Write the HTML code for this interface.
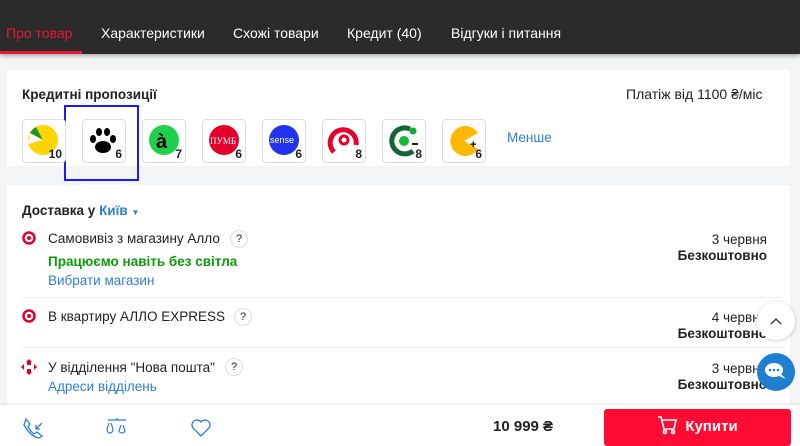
<!DOCTYPE html>
<html><head><meta charset="utf-8"><style>
*{margin:0;padding:0;box-sizing:border-box}
body{width:800px;height:446px;overflow:hidden;background:#f3f4f6;font-family:"Liberation Sans",Arial,sans-serif;position:relative;color:#222}
.hdr{position:absolute;left:0;top:0;width:800px;height:54px;background:#2b2b2b;box-shadow:0 2px 4px rgba(0,0,0,.3)}
.hdr span{position:absolute;top:25px;color:#fff;font-size:14px}
.ul{position:absolute;left:0;top:51px;width:82px;height:3px;background:#e8173d}
.card{position:absolute;background:#fff}
.t{position:absolute;white-space:nowrap}
.box{position:absolute;top:119px;width:44px;height:44px;border:1px solid #ddd;border-radius:4px;background:#fff}
.box svg{position:absolute;left:1px;top:1px}
.box .n{position:absolute;right:3px;bottom:1px;font-size:12px;font-weight:bold;color:#222}
.q{position:absolute;width:18px;height:18px;border:1px solid #ddd;border-radius:50%;font-size:11px;text-align:center;line-height:16px;color:#222}
.ln{position:absolute;left:22px;width:760px;height:1px;background:#eee}
</style></head><body>
<div class="hdr">
<span style="left:6px;color:#e8173d">Про товар</span>
<span style="left:101px">Характеристики</span>
<span style="left:233px">Схожі товари</span>
<span style="left:347px">Кредит (40)</span>
<span style="left:451px">Відгуки і питання</span>
<div class="ul"></div>
</div>
<div class="card" style="left:7px;top:70px;width:783px;height:96px"></div>
<div class="t" style="left:22px;top:87px;font-size:13.5px;font-weight:bold">Кредитні пропозиції</div>
<div class="t" style="left:626px;top:86px;font-size:14px">Платіж від 1100 ₴/міс</div>
<div style="position:absolute;left:64px;top:105px;width:75px;height:76px;border:2px solid #1a1aff"></div>
<div class="box" style="left:22px"><svg width="41" height="41"><circle cx="19" cy="19" r="15" fill="#ffd400"/><path d="M19 19L6 12A15 15 0 0 1 12 6Z" fill="#1a9a1a"/><path d="M19 19L4 23 6 12Z" fill="#fff"/></svg><span class="n">10</span></div>
<div class="box" style="left:82px"><svg width="41" height="41"><ellipse cx="19" cy="26" rx="8" ry="6" fill="#000"/><ellipse cx="9" cy="18" rx="3" ry="4" fill="#000"/><ellipse cx="15" cy="11" rx="3" ry="4" fill="#000"/><ellipse cx="23" cy="11" rx="3" ry="4" fill="#000"/><ellipse cx="29" cy="18" rx="3" ry="4" fill="#000"/></svg><span class="n">6</span></div>
<div class="box" style="left:142px"><svg width="41" height="41"><circle cx="20" cy="19" r="15" fill="#1fd14a"/><text x="12" y="27" font-size="20" font-weight="bold" font-family="Liberation Sans">à</text></svg><span class="n">7</span></div>
<div class="box" style="left:202px"><svg width="41" height="41"><circle cx="20" cy="19" r="15" fill="#e4002b"/><text x="6" y="23" font-size="9" fill="#fff" font-family="Liberation Serif">ПУМБ</text></svg><span class="n">6</span></div>
<div class="box" style="left:262px"><svg width="41" height="41"><circle cx="20" cy="19" r="15" fill="#2233ee"/><text x="6" y="22" font-size="9" fill="#fff" font-family="Liberation Sans">sense</text></svg><span class="n">6</span></div>
<div class="box" style="left:322px"><svg width="41" height="41"><path d="M10 31A13 13 0 1 1 32 24" fill="none" stroke="#e4002b" stroke-width="5"/><circle cx="20" cy="19" r="4" fill="none" stroke="#e4002b" stroke-width="3"/></svg><span class="n">8</span></div>
<div class="box" style="left:382px"><svg width="41" height="41"><path d="M29 30A13 13 0 1 1 26 8" fill="none" stroke="#116633" stroke-width="5"/><circle cx="20" cy="20" r="5" fill="#11bb33"/><circle cx="29" cy="10" r="3.5" fill="#11aa33"/><rect x="28" y="22" width="6" height="2" fill="#222"/></svg><span class="n">8</span></div>
<div class="box" style="left:442px"><svg width="41" height="41"><path d="M20 20L34 12A15 15 0 1 0 34 28Z" fill="#ffb800"/><text x="26" y="27" font-size="11" font-weight="bold">+</text></svg><span class="n">6</span></div>
<div class="t" style="left:507px;top:130px;font-size:13.5px;color:#2d7fd0">Менше</div>

<div class="card" style="left:7px;top:185px;width:783px;height:230px"></div>
<div class="t" style="left:22px;top:203px;font-size:13.5px;font-weight:bold">Доставка у <span style="color:#2d7fd0">Київ</span> <span style="color:#2d7fd0;font-size:8px">▼</span></div>
<svg style="position:absolute;left:22px;top:231px" width="14" height="14"><circle cx="7" cy="7" r="5.5" fill="none" stroke="#e4002b" stroke-width="2.5"/><circle cx="7" cy="7" r="2" fill="#e4002b"/></svg>
<div class="t" style="left:48px;top:231px;font-size:13.5px">Самовивіз з магазину Алло</div>
<div class="q" style="left:230px;top:230px">?</div>
<div class="t" style="left:48px;top:254px;font-size:13.5px;font-weight:bold;color:#0a9a0a">Працюємо навіть без світла</div>
<div class="t" style="left:48px;top:273px;font-size:13.5px;color:#2d7fd0">Вибрати магазин</div>
<div class="t" style="right:33px;top:232px;font-size:13.5px;text-align:right;line-height:16px">3 червня<br><b>Безкоштовно</b></div>
<div class="ln" style="top:297px"></div>
<svg style="position:absolute;left:22px;top:309px" width="14" height="14"><circle cx="7" cy="7" r="5.5" fill="none" stroke="#e4002b" stroke-width="2.5"/><circle cx="7" cy="7" r="2" fill="#e4002b"/></svg>
<div class="t" style="left:48px;top:309px;font-size:13.5px">В квартиру АЛЛО EXPRESS</div>
<div class="q" style="left:234px;top:308px">?</div>
<div class="t" style="right:33px;top:310px;font-size:13.5px;text-align:right;line-height:16px">4 червня<br><b>Безкоштовно</b></div>
<div class="ln" style="top:347px"></div>
<svg style="position:absolute;left:21px;top:359px" width="16" height="16"><path d="M8 0L11 3H5ZM8 16L11 13H5ZM0 8L3 5V11ZM16 8L13 5V11Z" fill="#e4002b"/><rect x="6" y="3" width="4" height="3" fill="#e4002b"/><rect x="6" y="10" width="4" height="3" fill="#e4002b"/></svg>
<div class="t" style="left:48px;top:360px;font-size:13.5px">У відділення "Нова пошта"</div>
<div class="q" style="left:225px;top:358px">?</div>
<div class="t" style="left:48px;top:379px;font-size:13.5px;color:#2d7fd0">Адреси відділень</div>
<div class="t" style="right:33px;top:361px;font-size:13.5px;text-align:right;line-height:16px">3 червня<br><b>Безкоштовно</b></div>

<div style="position:absolute;left:0;top:405px;width:800px;height:41px;background:#fff;box-shadow:0 -1px 3px rgba(0,0,0,.1)"></div>
<svg style="position:absolute;left:22px;top:417px" width="22" height="22" fill="none" stroke="#2d7fd0" stroke-width="1.3"><path d="M4 2L8 7 6 10Q9 15 12 17L15 15 20 19 17 21Q9 20 2 8Z"/><path d="M20 6L14 12M14 8V12H18"/></svg>
<svg style="position:absolute;left:106px;top:418px" width="22" height="20" fill="none" stroke="#2d7fd0" stroke-width="1.2"><path d="M2 2H20M11 0V2M3 5L1 11A3 4 0 0 0 7 11L5 5M15 7L13 13A3.5 4 0 0 0 19 13L17 7"/></svg>
<svg style="position:absolute;left:190px;top:418px" width="22" height="20" fill="none" stroke="#2d7fd0" stroke-width="1.3"><path d="M11 18L3 10A4.5 4.5 0 0 1 11 4A4.5 4.5 0 0 1 19 10Z"/></svg>
<div class="t" style="left:493px;top:418px;font-size:15px;font-weight:bold">10 999 ₴</div>
<div style="position:absolute;left:604px;top:409px;width:187px;height:37px;background:#ff0b33;border-radius:3px;color:#fff;font-size:15px;font-weight:bold;text-align:center;line-height:35px"><svg style="vertical-align:-4px;margin-right:8px" width="20" height="20" fill="none" stroke="#fff" stroke-width="1.6"><path d="M1 2H4L7 14H17L19 5H5"/><circle cx="8" cy="17" r="1.5"/><circle cx="16" cy="17" r="1.5"/></svg>Купити</div>
<div style="position:absolute;left:757px;top:302px;width:38px;height:38px;border-radius:50%;background:#fff;box-shadow:0 1px 4px rgba(0,0,0,.2)"><svg width="38" height="38" fill="none" stroke="#333" stroke-width="1.3"><path d="M14 22L19 17 24 22"/></svg></div>
<div style="position:absolute;left:757px;top:353px;width:38px;height:38px;border-radius:50%;background:#1e7fd0"><svg width="38" height="38"><ellipse cx="17" cy="17" rx="9" ry="7" fill="#fff"/><circle cx="13" cy="17" r="1.3" fill="#1e7fd0"/><circle cx="17" cy="17" r="1.3" fill="#1e7fd0"/><circle cx="21" cy="17" r="1.3" fill="#1e7fd0"/><path d="M24 21L29 26 22 23" fill="#fff"/></svg></div>
</body></html>
